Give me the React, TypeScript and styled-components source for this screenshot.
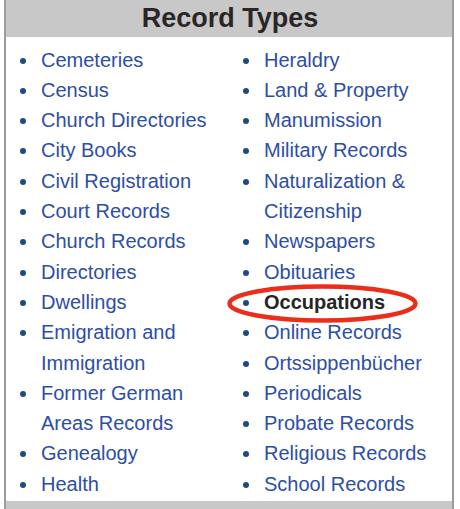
import React from "react";
import styled, { createGlobalStyle } from "styled-components";

const Global = createGlobalStyle`
  html, body { margin: 0; padding: 0; background: #ffffff; }
  body { font-family: "Liberation Sans", Arial, sans-serif; }
`;

const Panel = styled.section`
  margin-left: 4px;
  width: 446px;
  height: 509px;
  border-left: 2px solid #9c9c9c;
  border-right: 2px solid #9c9c9c;
  display: flex;
  flex-direction: column;
  overflow: hidden;
`;

const Header = styled.h2`
  margin: 0;
  height: 37px;
  background: #c8c8c8;
  color: #2b2626;
  font-size: 27px;
  font-weight: bold;
  line-height: 37px;
  text-align: center;
  padding-left: 2px;
  flex: none;
`;

const Body = styled.div`
  flex: 1;
  display: grid;
  grid-template-columns: 223px 1fr;
  padding: 7.6px 0 0 14px;
`;

const List = styled.ul`
  list-style: none;
  margin: 0;
  padding: 0;
`;

const Item = styled.li`
  position: relative;
  display: grid;
  grid-template-columns: 21px 1fr;
  font-size: 20px;
  line-height: 30.3px;
`;

const Bullet = styled.span`
  width: 6px;
  height: 6px;
  border-radius: 50%;
  background: #1f4a7e;
  margin-top: 13px;
`;

const Link = styled.a<{ $active?: boolean }>`
  color: ${(p) => (p.$active ? "#262626" : "#2d4ea6")};
  font-weight: ${(p) => (p.$active ? "bold" : "normal")};
  text-decoration: none;
  white-space: pre-line;
`;

const Ring = styled.svg`
  position: absolute;
  left: -16px;
  top: -3px;
  width: 191px;
  height: 39px;
  overflow: visible;
  pointer-events: none;
`;

const Footer = styled.div`
  height: 8px;
  background: #c8c8c8;
  flex: none;
`;

const left = [
  "Cemeteries",
  "Census",
  "Church Directories",
  "City Books",
  "Civil Registration",
  "Court Records",
  "Church Records",
  "Directories",
  "Dwellings",
  "Emigration and\nImmigration",
  "Former German\nAreas Records",
  "Genealogy",
  "Health",
];

const right = [
  "Heraldry",
  "Land & Property",
  "Manumission",
  "Military Records",
  "Naturalization &\nCitizenship",
  "Newspapers",
  "Obituaries",
  "Occupations",
  "Online Records",
  "Ortssippenbücher",
  "Periodicals",
  "Probate Records",
  "Religious Records",
  "School Records",
];

function Column({ items, active }: { items: string[]; active?: string }) {
  return (
    <List>
      {items.map((t) => (
        <Item key={t}>
          <Bullet />
          <Link href="#" $active={t === active}>
            {t}
          </Link>
          {t === active && (
            <Ring viewBox="0 0 191 39">
              <ellipse
                cx="95.5"
                cy="19.5"
                rx="93"
                ry="17"
                fill="none"
                stroke="#ea2e1a"
                strokeWidth="4.5"
              />
            </Ring>
          )}
        </Item>
      ))}
    </List>
  );
}

export default function App() {
  return (
    <>
      <Global />
      <Panel>
        <Header>Record Types</Header>
        <Body>
          <Column items={left} />
          <Column items={right} active="Occupations" />
        </Body>
        <Footer />
      </Panel>
    </>
  );
}
